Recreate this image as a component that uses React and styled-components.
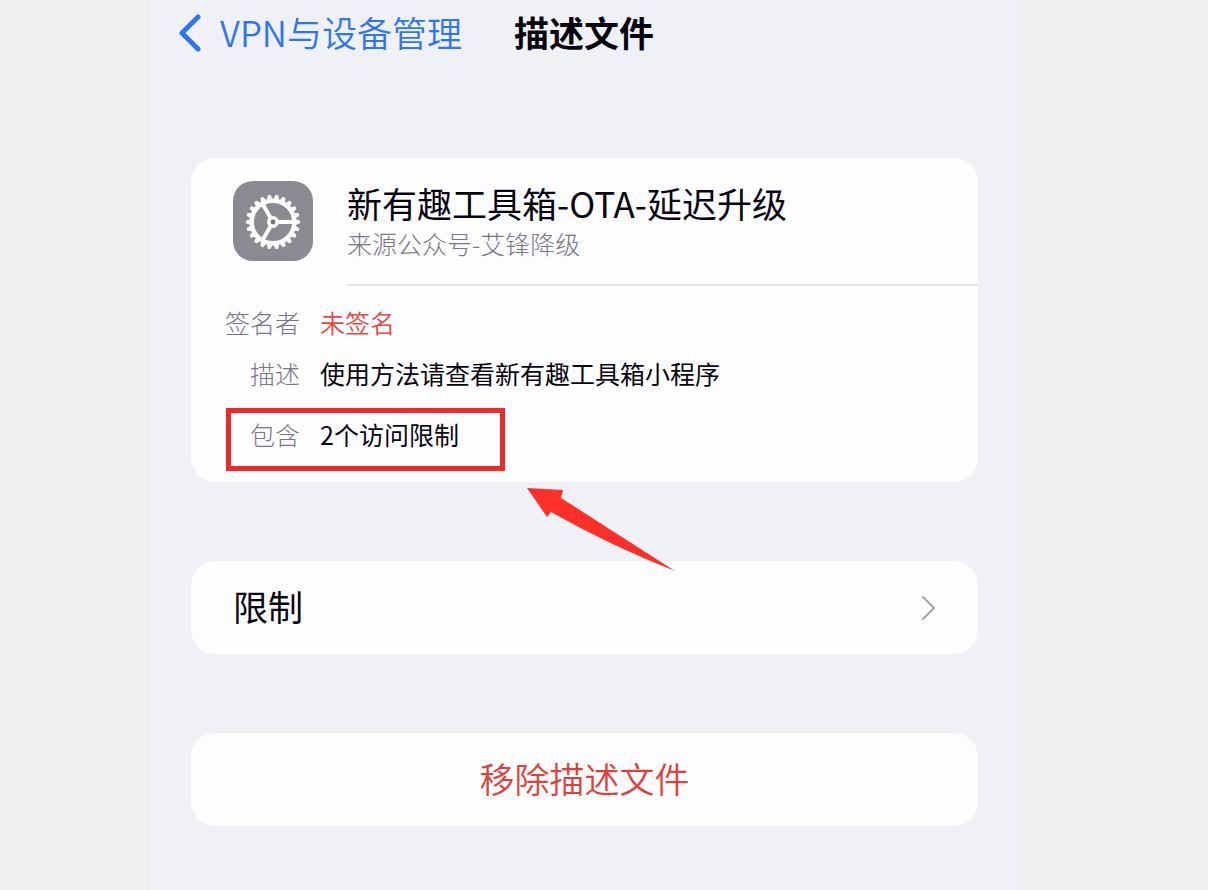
import styled, { createGlobalStyle } from "styled-components";

const GlobalStyle = createGlobalStyle`
  * {
    box-sizing: border-box;
  }

  body {
    margin: 0;
    background: #eeeff1;
    font-family: "Noto Sans CJK SC", sans-serif;
    color: #07050f;
  }
`

const Page = styled.div`
  display: grid;
  grid-template-columns: 150fr 870fr 188fr;
  min-height: 100vh;
`

const Screen = styled.div`
  grid-column: 2;
  padding: 0 42px 64px 41px;
  background: #f0f1f7;
`

const NavBar = styled.header`
  display: flex;
  align-items: center;
  gap: 52px;
  height: 64px;
  margin-left: -13px;
`

const BackLink = styled.a`
  display: flex;
  align-items: center;
  gap: 18px;
  color: #2f76ee;
  font-size: 35px;
  font-weight: 350;
  line-height: 44px;
  text-decoration: none;
  white-space: nowrap;
`

const NavTitle = styled.h1`
  margin: 0;
  font-size: 35px;
  font-weight: 700;
  line-height: 44px;
  white-space: nowrap;
`

const Main = styled.main`
  display: flex;
  flex-direction: column;
  gap: 79px;
  padding-top: 94px;
`

const Card = styled.section`
  position: relative;
  height: 324px;
  border-radius: 24px;
  background: #fdfdff;
`

const Profile = styled.div`
  display: flex;
  gap: 34px;
  padding-left: 42px;
`

const AppIcon = styled.svg`
  flex: none;
  width: 80px;
  height: 80px;
  margin-top: 23px;
`

const ProfileText = styled.div`
  flex: 1;
  height: 128px;
  padding-top: 21px;
  border-bottom: 2px solid #e2e3e9;
`

const ProfileName = styled.h2`
  margin: 0;
  font-size: 35px;
  font-weight: 400;
  line-height: 48px;
`

const ProfileSource = styled.p`
  margin: 0;
  color: #7c7588;
  font-size: 25px;
  font-weight: 300;
  line-height: 32px;
`

const Details = styled.dl`
  display: flex;
  flex-direction: column;
  gap: 20px;
  margin: 0;
  padding: 21px 34px;
`

const DetailRow = styled.div`
  position: relative;
  display: grid;
  grid-template-columns: 75px 1fr;
  gap: 20px;
  padding-top: ${(props) => (props.$spaced ? "10px" : "0")};
  font-size: 25px;
  line-height: 31px;
`

const Label = styled.dt`
  color: #7c7588;
  font-weight: 300;
  text-align: right;
`

const Value = styled.dd`
  margin: 0;
  color: ${(props) => (props.$alert ? "#e8463f" : "inherit")};
  font-weight: ${(props) => (props.$alert ? 350 : 400)};
`

const Highlight = styled.span`
  position: absolute;
  top: -1px;
  left: 1px;
  width: 279px;
  height: 63px;
  border: 5px solid #ee2a27;
`

const Arrow = styled.svg`
  position: absolute;
  top: 330px;
  left: 335px;
  width: 150px;
  height: 84px;
  z-index: 1;
`

const RowButton = styled.button`
  display: flex;
  align-items: center;
  justify-content: ${(props) => (props.$danger ? "center" : "space-between")};
  width: 100%;
  height: 93px;
  padding: 0 42px 3px;
  border: 0;
  border-radius: 24px;
  background: #fdfdff;
  color: ${(props) => (props.$danger ? "#e0403a" : "inherit")};
  font-family: inherit;
  font-size: 35px;
  font-weight: ${(props) => (props.$danger ? 350 : 400)};
  line-height: 44px;
  cursor: pointer;
`

const teeth = Array.from({ length: 22 }, (_, i) => (i * 360) / 22)

const GearIcon = () => {
  return (
    <AppIcon viewBox="0 0 80 80" aria-hidden="true">
      <rect width="80" height="80" rx="20" fill="#898a92" />
      <g fill="none" stroke="#fdfdff">
        <circle cx="40" cy="41" r="21.3" strokeWidth="4.4" />
        {teeth.map((angle) => (
          <path
            key={angle}
            d="M62.5 38.7 L66.6 39.9 V42.1 L62.5 43.3 Z"
            fill="#fdfdff"
            strokeWidth="1"
            strokeLinejoin="round"
            transform={`rotate(${angle} 40 41)`}
          />
        ))}
        <path d="M40 41 H61 M40 41 L29.5 22.8 M40 41 L29.5 59.2" strokeWidth="4" />
        <circle cx="40" cy="41" r="4.2" fill="#6f7080" strokeWidth="3.6" />
      </g>
    </AppIcon>
  )
}

const App = () => {
  return (
    <>
    <GlobalStyle />
    <Page>
      <Screen>
        <NavBar>
          <BackLink href="#">
            <svg width="24" height="40" viewBox="0 0 24 40" fill="none" aria-hidden="true">
              <path d="M20 5 L4 21 L20 37" stroke="#2f76ee" strokeWidth="5" strokeLinecap="round" strokeLinejoin="round" />
            </svg>
            VPN与设备管理
          </BackLink>
          <NavTitle>描述文件</NavTitle>
        </NavBar>
        <Main>
          <Card>
            <Profile>
              <GearIcon />
              <ProfileText>
                <ProfileName>新有趣工具箱-OTA-延迟升级</ProfileName>
                <ProfileSource>来源公众号-艾锋降级</ProfileSource>
              </ProfileText>
            </Profile>
            <Details>
              <DetailRow>
                <Label>签名者</Label>
                <Value $alert>未签名</Value>
              </DetailRow>
              <DetailRow>
                <Label>描述</Label>
                <Value>使用方法请查看新有趣工具箱小程序</Value>
              </DetailRow>
              <DetailRow $spaced>
                <Label>包含</Label>
                <Value>2个访问限制<Highlight /></Value>
              </DetailRow>
            </Details>
            <Arrow viewBox="0 0 150 84" aria-hidden="true">
              <path d="M1 0 L37 2 L35 10 L149 83 Q83 57 25 24 L21 29 Z" fill="#fc3029" />
            </Arrow>
          </Card>
          <RowButton>
            限制
            <svg width="16" height="28" viewBox="0 0 16 28" fill="none" aria-hidden="true">
              <path d="M3 5 L14 16 L3 27" stroke="#a5a1aa" strokeWidth="2" strokeLinecap="round" />
            </svg>
          </RowButton>
          <RowButton $danger>移除描述文件</RowButton>
        </Main>
      </Screen>
    </Page>
    </>
  )
}

export default App;
